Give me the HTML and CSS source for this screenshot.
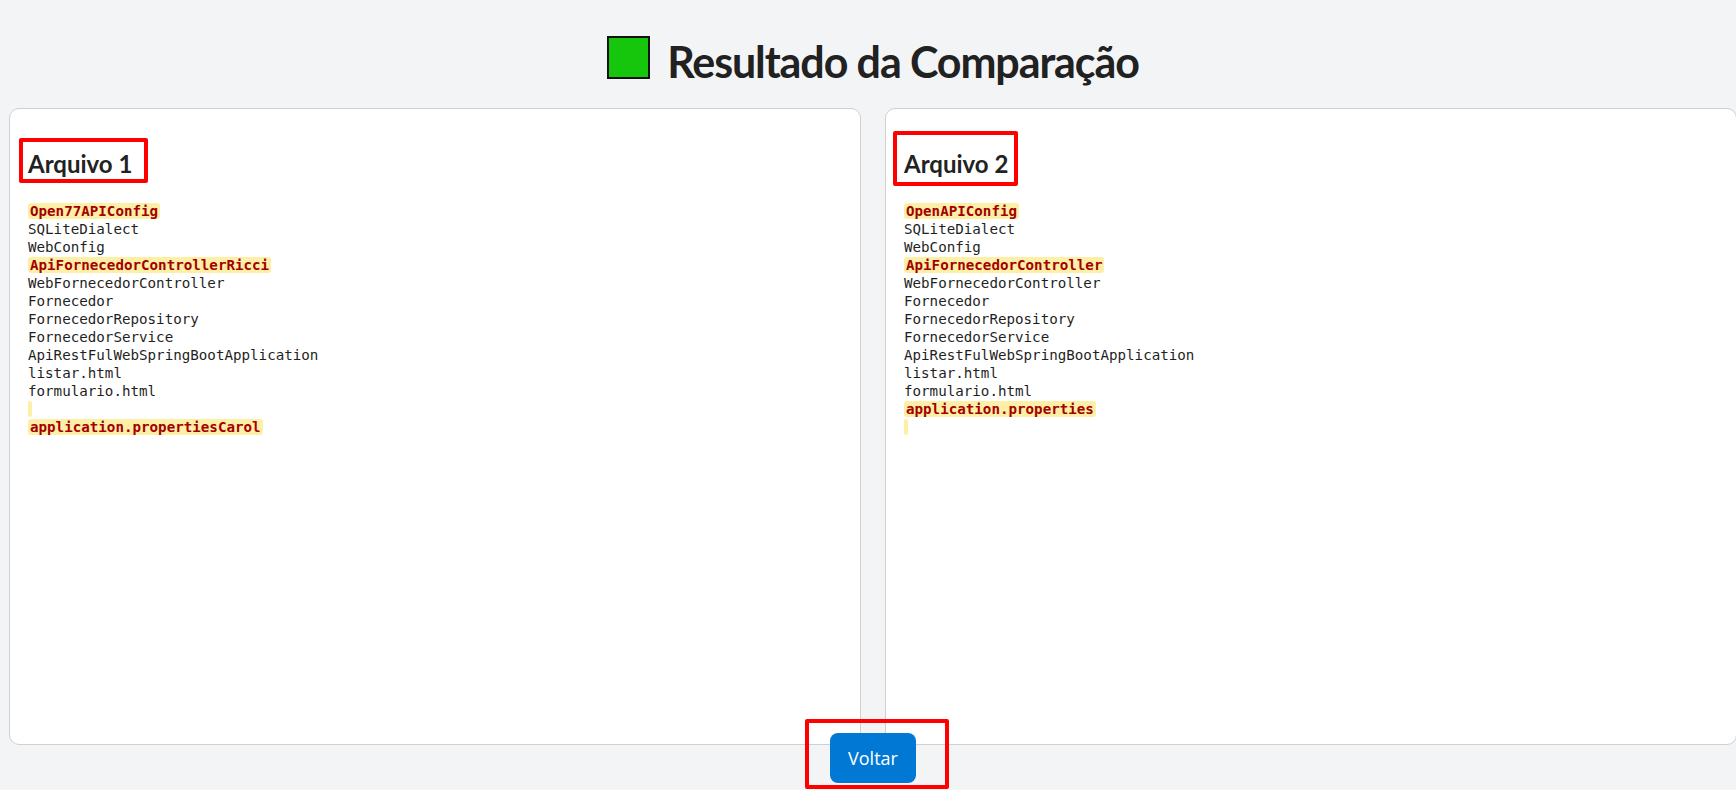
FILE: index.html
```html
<!DOCTYPE html>
<html lang="pt-BR">
<head>
<meta charset="utf-8">
<title>Resultado da Comparação</title>
<link rel="stylesheet" href="styles.css">
</head>
<body>
<div class="page">
  <h1 class="title"><span class="square" aria-hidden="true"></span>Resultado da Comparação</h1>
  <div class="panels">
    <section class="panel">
      <h2 class="panel-title">Arquivo 1</h2>
      <div class="code">
        <div class="line"><span class="diff">Open77APIConfig</span></div>
        <div class="line">SQLiteDialect</div>
        <div class="line">WebConfig</div>
        <div class="line"><span class="diff">ApiFornecedorControllerRicci</span></div>
        <div class="line">WebFornecedorController</div>
        <div class="line">Fornecedor</div>
        <div class="line">FornecedorRepository</div>
        <div class="line">FornecedorService</div>
        <div class="line">ApiRestFulWebSpringBootApplication</div>
        <div class="line">listar.html</div>
        <div class="line">formulario.html</div>
        <div class="line"><span class="diff"></span></div>
        <div class="line"><span class="diff">application.propertiesCarol</span></div>
      </div>
    </section>
    <section class="panel">
      <h2 class="panel-title">Arquivo 2</h2>
      <div class="code">
        <div class="line"><span class="diff">OpenAPIConfig</span></div>
        <div class="line">SQLiteDialect</div>
        <div class="line">WebConfig</div>
        <div class="line"><span class="diff">ApiFornecedorController</span></div>
        <div class="line">WebFornecedorController</div>
        <div class="line">Fornecedor</div>
        <div class="line">FornecedorRepository</div>
        <div class="line">FornecedorService</div>
        <div class="line">ApiRestFulWebSpringBootApplication</div>
        <div class="line">listar.html</div>
        <div class="line">formulario.html</div>
        <div class="line"><span class="diff">application.properties</span></div>
        <div class="line"><span class="diff"></span></div>
      </div>
    </section>
  </div>
  <div class="actions"><button class="btn" type="button">Voltar</button></div>
</div>
<div class="annot annot-a1"></div>
<div class="annot annot-a2"></div>
<div class="annot annot-btn"></div>
</body>
</html>
```
FILE: styles.css
```css
html, body {
  margin: 0;
  padding: 0;
}
body {
  background: #f3f4f6;
  color: #222222;
  font-family: "Open Sans", "Noto Sans", sans-serif;
  overflow: hidden;
  position: relative;
  height: 790px;
}
.page {
  width: 1728px;
  padding-left: 9px;
}
.title {
  margin: 32px 0 16px;
  font-family: Lato, "Open Sans", sans-serif;
  font-size: 43px;
  line-height: 60px;
  font-weight: 700;
  letter-spacing: -1.1px;
  text-align: center;
  color: #212121;
  white-space: nowrap;
}
.square {
  display: inline-block;
  width: 39px;
  height: 39px;
  background: #16c60c;
  border: 2px solid #111111;
  margin-right: 17px;
  vertical-align: -1px;
}
.panels {
  display: flex;
  gap: 24px;
  margin-bottom: -12px;
}
.panel {
  flex: 0 0 852px;
  box-sizing: border-box;
  height: 637px;
  background: #ffffff;
  border: 1px solid #d0d0d0;
  border-radius: 10px;
  padding: 18px 18px;
}
.panel-title {
  margin: 21px 0 22px;
  font-family: Lato, "Open Sans", sans-serif;
  font-size: 24px;
  line-height: 32px;
  font-weight: 700;
  color: #222222;
}
.code {
  font-family: "DejaVu Sans Mono", "Liberation Mono", monospace;
  font-size: 14.2px;
  line-height: 18px;
  color: #1f1f1f;
}
.line {
  white-space: pre;
  height: 18px;
}
.diff {
  background: #fdefa6;
  color: #a40000;
  font-weight: 700;
  padding: 0 2px;
  border-radius: 3px;
}
.actions {
  text-align: center;
}
.btn {
  font-family: "Open Sans", "Noto Sans", sans-serif;
  font-size: 18px;
  color: #ffffff;
  background: #0078d4;
  border: 0;
  border-radius: 8px;
  height: 50px;
  padding: 0 18px;
  cursor: pointer;
}
.annot {
  position: absolute;
  box-sizing: border-box;
  border: 4px solid #ff0000;
  border-radius: 2px;
  pointer-events: none;
}
.annot-a1 {
  left: 19px;
  top: 138px;
  width: 129px;
  height: 45px;
}
.annot-a2 {
  left: 893px;
  top: 131px;
  width: 125px;
  height: 55px;
}
.annot-btn {
  left: 805px;
  top: 719px;
  width: 144px;
  height: 70px;
}
```
